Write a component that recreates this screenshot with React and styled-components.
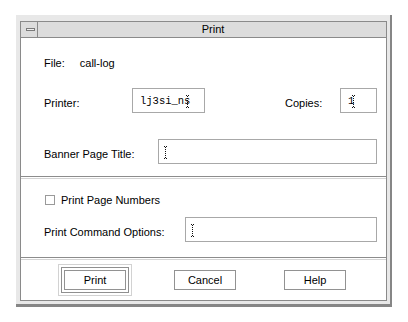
import React from "react";
import styled, { createGlobalStyle } from "styled-components";

const Global = createGlobalStyle`
  *, *::before, *::after { box-sizing: border-box; }
  html, body { margin: 0; padding: 0; background: #fff; }
  body {
    font-family: "Liberation Sans", Arial, sans-serif;
    font-size: 11px;
    color: #000;
  }
`;

const Page = styled.div`
  padding: 15px 0 0 16px;
`;

const Frame = styled.div`
  width: 376px;
  height: 292px;
  background: #e8e8e8;
  padding: 6px 3px 3px 4px;
  border-right: 2px solid #868686;
  border-bottom: 3px solid #868686;
`;

const Inner = styled.div`
  height: 100%;
  display: flex;
  flex-direction: column;
  background: #fff;
  border: 1px solid #8a8a8a;
`;

const TitleBar = styled.div`
  height: 16px;
  display: flex;
  background: #dcdcdc;
  border-bottom: 1px solid #8a8a8a;
`;

const MenuButton = styled.div`
  width: 17px;
  display: flex;
  align-items: center;
  justify-content: center;
  padding-left: 2px;
  border-right: 1px solid #8a8a8a;
`;

const MenuGlyph = styled.span`
  width: 9px;
  height: 3px;
  border: 1px solid #7a7a7a;
  background: #eeeeee;
`;

const Title = styled.div`
  flex: 1;
  text-align: center;
  line-height: 15px;
  padding-left: 2px;
`;

const Section = styled.div`
  height: ${(p) => p.$h}px;
  display: flex;
  flex-direction: column;
  padding: ${(p) => p.$pt}px 9px 0 23px;
`;

const Row = styled.div`
  display: flex;
  align-items: center;
  height: ${(p) => p.$h}px;
  margin-top: ${(p) => p.$mt || 0}px;
`;

const Label = styled.span`
  flex: none;
  width: ${(p) => (p.$w ? `${p.$w}px` : "auto")};
  margin-left: ${(p) => (p.$push ? "auto" : "0")};
  padding-top: 4px;
  white-space: nowrap;
`;

const PlainText = styled.span`
  white-space: nowrap;
  margin-right: ${(p) => p.$mr || 0}px;
`;

const Field = styled.div`
  height: 25px;
  ${(p) => (p.$w ? `width: ${p.$w}px; flex: none;` : "flex: 1;")}
  display: flex;
  align-items: center;
  padding-left: 4px;
  border: 1px solid #a8a8a8;
  background: #fff;
  font-family: "Liberation Mono", "Courier New", monospace;
  font-size: 10.5px;
`;

const Value = styled.span`
  padding-left: 3px;
  white-space: pre;
`;

const CaretSvg = styled.svg`
  flex: none;
  margin-left: ${(p) => p.$ml || 0}px;
  margin-top: 1px;
`;

const Caret = ({ ml }) => (
  <CaretSvg $ml={ml} width="5" height="13" viewBox="0 0 5 13" shapeRendering="crispEdges">
    <g fill="#111">
      <rect x="1" y="0" width="1" height="1" />
      <rect x="3" y="0" width="1" height="1" />
      <rect x="2" y="1" width="1" height="1" />
      <rect x="2" y="3" width="1" height="1" />
      <rect x="2" y="5" width="1" height="1" />
      <rect x="2" y="7" width="1" height="1" />
      <rect x="2" y="9" width="1" height="1" />
      <rect x="2" y="11" width="1" height="1" />
      <rect x="1" y="12" width="1" height="1" />
      <rect x="3" y="12" width="1" height="1" />
    </g>
  </CaretSvg>
);

const Divider = styled.div`
  height: 3px;
  flex: none;
  background: #fff;
  border-top: 1px solid #8c8c8c;
  border-bottom: 1px solid #d4d4d4;
`;

const CheckBox = styled.span`
  width: 10px;
  height: 10px;
  margin-left: 1px;
  margin-right: 6px;
  border: 1px solid #9a9a9a;
  background: #fff;
  flex: none;
`;

const ButtonBar = styled.div`
  height: 40px;
  display: grid;
  grid-template-columns: repeat(3, 110px);
  justify-items: center;
  align-items: center;
  padding-left: 19px;
`;

const DefaultRing = styled.span`
  display: inline-flex;
  padding: 2px;
  border: 1px solid #d2d2d2;
`;

const DefaultInner = styled.span`
  display: inline-flex;
  padding: 2px;
  border: 1px solid #8f8f8f;
`;

const Button = styled.button`
  width: 62px;
  height: 20px;
  padding: 0;
  margin: 0;
  border: 1px solid #929292;
  background: #fff;
  font-family: "Liberation Sans", Arial, sans-serif;
  font-size: 11px;
  color: #000;
  line-height: 18px;
`;

export default function App() {
  return (
    <>
      <Global />
      <Page>
        <Frame>
          <Inner>
            <TitleBar>
              <MenuButton>
                <MenuGlyph />
              </MenuButton>
              <Title>Print</Title>
            </TitleBar>

            <Section $h={138} $pt={18}>
              <Row $h={13}>
                <PlainText $mr={15}>File:</PlainText>
                <PlainText>call-log</PlainText>
              </Row>
              <Row $h={25} $mt={19}>
                <Label $w={88}>Printer:</Label>
                <Field $w={73}>
                  <Value>lj3si_ns</Value>
                  <Caret ml={-5} />
                </Field>
                <Label $w={55} $push>Copies:</Label>
                <Field $w={37}>
                  <Value>1</Value>
                  <Caret ml={-3} />
                </Field>
              </Row>
              <Row $h={25} $mt={26}>
                <Label $w={114}>Banner Page Title:</Label>
                <Field>
                  <Caret />
                </Field>
              </Row>
            </Section>

            <Divider />

            <Section $h={78} $pt={14}>
              <Row $h={13}>
                <CheckBox />
                <PlainText>Print Page Numbers</PlainText>
              </Row>
              <Row $h={25} $mt={11}>
                <Label $w={141}>Print Command Options:</Label>
                <Field>
                  <Caret />
                </Field>
              </Row>
            </Section>

            <Divider />

            <ButtonBar>
              <DefaultRing>
                <DefaultInner>
                  <Button>Print</Button>
                </DefaultInner>
              </DefaultRing>
              <Button>Cancel</Button>
              <Button>Help</Button>
            </ButtonBar>
          </Inner>
        </Frame>
      </Page>
    </>
  );
}
